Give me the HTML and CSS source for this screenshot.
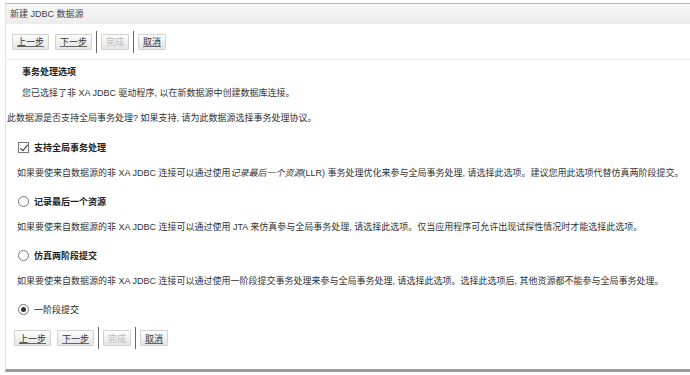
FILE: index.html
```html
<!DOCTYPE html>
<html lang="zh-CN">
<head>
    <meta charset="UTF-8">
    <title>新建 JDBC 数据源</title>
    <link rel="stylesheet" href="styles.css">
</head>
<body>
    <div class="window">
        <div class="title-bar">新建 JDBC 数据源</div>

        <div class="toolbar">
            <button class="btn"><u>上一步</u></button>
            <button class="btn"><u>下一步</u></button>
            <span class="sep"></span>
            <button class="btn" disabled>完成</button>
            <span class="sep"></span>
            <button class="btn"><u>取消</u></button>
        </div>

        <div class="content">
            <h3 class="section-title">事务处理选项</h3>
            <p class="intro">您已选择了非 XA JDBC 驱动程序, 以在新数据源中创建数据库连接。</p>
            <p class="question">此数据源是否支持全局事务处理? 如果支持, 请为此数据源选择事务处理协议。</p>

            <label class="option check">
                <span class="checkbox checked"></span>
                <span>支持全局事务处理</span>
            </label>
            <p class="desc">如果要使来自数据源的非 XA JDBC 连接可以通过使用<em>记录最后一个资源</em>(LLR) 事务处理优化来参与全局事务处理, 请选择此选项。建议您用此选项代替仿真两阶段提交。</p>

            <label class="option">
                <span class="radio"></span>
                <span>记录最后一个资源</span>
            </label>
            <p class="desc">如果要使来自数据源的非 XA JDBC 连接可以通过使用 JTA 来仿真参与全局事务处理, 请选择此选项。仅当应用程序可允许出现试探性情况时才能选择此选项。</p>

            <label class="option">
                <span class="radio"></span>
                <span>仿真两阶段提交</span>
            </label>
            <p class="desc">如果要使来自数据源的非 XA JDBC 连接可以通过使用一阶段提交事务处理来参与全局事务处理, 请选择此选项。选择此选项后, 其他资源都不能参与全局事务处理。</p>

            <label class="option plain">
                <span class="radio selected"></span>
                <span>一阶段提交</span>
            </label>
        </div>

        <div class="toolbar bottom">
            <button class="btn"><u>上一步</u></button>
            <button class="btn"><u>下一步</u></button>
            <span class="sep"></span>
            <button class="btn" disabled>完成</button>
            <span class="sep"></span>
            <button class="btn"><u>取消</u></button>
        </div>
    </div>
</body>
</html>
```

FILE: styles.css
```css
* {
    margin: 0;
    padding: 0;
    box-sizing: border-box;
    font-family: "Liberation Sans", "Noto Sans CJK SC", sans-serif;
}

body {
    background: #ffffff;
    color: #333;
    font-size: 9px;
}

.window {
    margin: 3px 0 0 5px;
    height: 369px;
    border-top: 1px solid #b8b8b8;
    border-left: 1px solid #e2e2e2;
    border-bottom: 3px solid #9a9a9a;
    display: flex;
    flex-direction: column;
}

.title-bar {
    height: 20px;
    line-height: 20px;
    padding-left: 4px;
    background: linear-gradient(to bottom, #f7f7f7, #ececec);
    color: #444;
}

.toolbar {
    display: flex;
    align-items: center;
    gap: 6px;
    height: 36px;
    padding-left: 6px;
    border-bottom: 1px solid #f0f0f0;
}

.toolbar.bottom {
    height: 40px;
    padding-left: 8px;
    border-bottom: none;
    margin-top: auto;
    padding-bottom: 22px;
}

.btn {
    height: 16px;
    padding: 0 4px;
    font-size: 9px;
    color: #333;
    background: linear-gradient(to bottom, #fdfdfd, #e4e4e4);
    border: 1px solid #d2d2d2;
    border-radius: 1px;
}

.btn u {
    text-decoration-color: #666;
}

.btn:disabled {
    color: #bbb;
}

.sep {
    width: 1px;
    height: 22px;
    background: #666;
    margin: 0 -2px;
}

.content {
    padding: 0 0 0 1px;
}

.section-title {
    font-size: 9px;
    font-weight: bold;
    line-height: 20px;
    margin-top: 2px;
    padding-left: 15px;
    color: #222;
}

.intro {
    line-height: 20px;
    margin-top: 1px;
    padding-left: 15px;
}

.question {
    line-height: 20px;
    margin-top: 5px;
}

.option {
    display: flex;
    align-items: center;
    gap: 5px;
    height: 20px;
    padding-left: 11px;
    font-weight: bold;
    color: #222;
    margin-top: 8px;
}

.option.check {
    margin-top: 9px;
}

.option.plain {
    font-weight: normal;
}

.checkbox {
    width: 11px;
    height: 11px;
    border: 1px solid #777;
    background: #fff;
    position: relative;
}

.checkbox.checked::after {
    content: "";
    position: absolute;
    left: 3px;
    top: 0px;
    width: 3px;
    height: 7px;
    border-right: 1px solid #333;
    border-bottom: 1px solid #333;
    transform: rotate(40deg);
}

.radio {
    width: 11px;
    height: 11px;
    border: 1px solid #777;
    border-radius: 50%;
    background: #fff;
    position: relative;
}

.radio.selected::after {
    content: "";
    position: absolute;
    left: 2px;
    top: 2px;
    width: 5px;
    height: 5px;
    border-radius: 50%;
    background: #333;
}

.desc {
    line-height: 20px;
    margin-top: 6px;
    padding-left: 10px;
    white-space: nowrap;
}

.desc em {
    font-style: italic;
}
```
